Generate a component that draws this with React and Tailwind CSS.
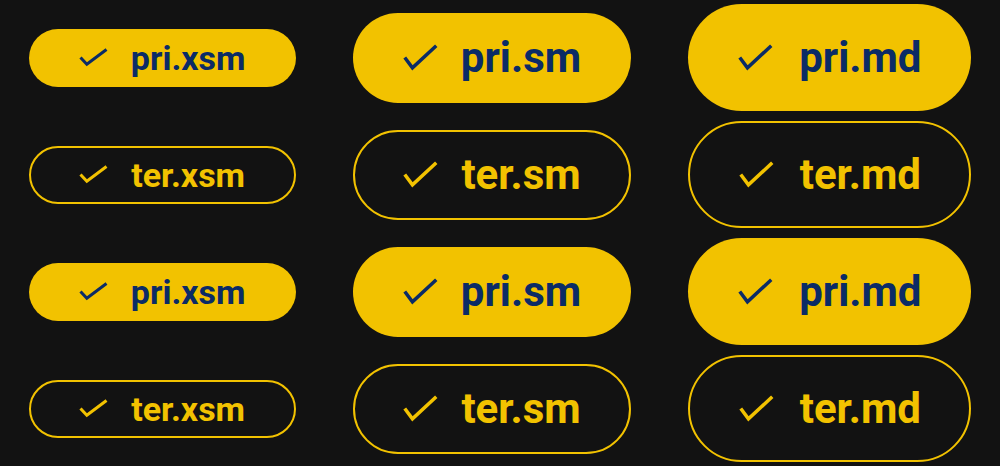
const sizes = {
  xsm: { box: 'w-[267px] h-[58px] gap-[23px] text-[34px]', border: 'border-2', icon: [29, 19, 3] },
  sm: { box: 'w-[278px] h-[90px] gap-[23px] text-[42px]', border: 'border-[2.5px]', icon: [35, 27, 3.5] },
  md: { box: 'w-[283px] h-[107px] gap-[26px] text-[42px]', border: 'border-[2.5px]', icon: [35, 27, 3.5] },
}

function Check({ w, h, sw }) {
  return (
    <svg width={w} height={h} viewBox={`0 0 ${w} ${h}`} fill="none" stroke="currentColor" strokeWidth={sw} strokeLinecap="butt" strokeLinejoin="miter">
      <polyline points={`${sw * 0.5},${h * 0.5} ${w * 0.27},${h - sw * 0.9} ${w - sw * 0.5},${sw * 0.5}`} />
    </svg>
  )
}

function Button({ variant, size }) {
  const s = sizes[size]
  const look =
    variant === 'pri'
      ? 'bg-[#f2c200] text-[#0b2b66]'
      : `${s.border} border-[#f2c200] text-[#f2c200]`
  const [w, h, sw] = s.icon
  return (
    <button className={`flex items-center justify-center rounded-full font-bold leading-none ${s.box} ${look}`}>
      <Check w={w} h={h} sw={sw} />
      <span className="font-['Roboto',sans-serif]">{variant}.{size}</span>
    </button>
  )
}

export default function App() {
  const rows = ['pri', 'ter', 'pri', 'ter']
  return (
    <div className="min-h-screen bg-[#121212] pt-[4px] flex flex-col gap-[10px]">
      {rows.map((v, i) => (
        <div key={i} className="flex h-[107px] items-center justify-around">
          <Button variant={v} size="xsm" />
          <Button variant={v} size="sm" />
          <Button variant={v} size="md" />
        </div>
      ))}
    </div>
  )
}
